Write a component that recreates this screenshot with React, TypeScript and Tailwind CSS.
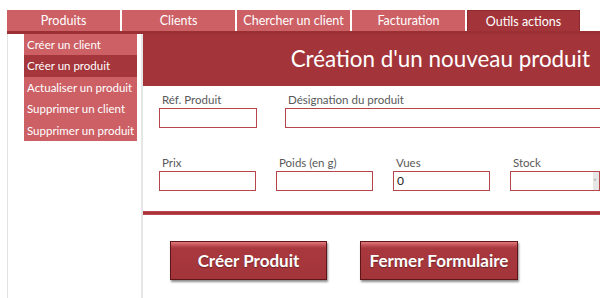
const tabs = ["Produits", "Clients", "Chercher un client", "Facturation", "Outils actions"];
const menu = ["Créer un client", "Créer un produit", "Actualiser un produit", "Supprimer un client", "Supprimer un produit"];

const Field = ({ label, width, value, select }: { label: string; width: string; value?: string; select?: boolean }) => (
  <div className={`flex flex-col shrink-0 ${width}`}>
    <span className="pl-[3px] text-[11.5px] leading-[14px] text-[#595959] whitespace-nowrap">{label}</span>
    <div className="relative mt-[1px] h-[20px] border border-[#b5464c] bg-white pl-[3px] text-[12px] leading-[18px] text-[#222]">
      {value}
      {select && (
        <span className="absolute right-0 top-0 h-full w-[6px] bg-[#e6e6e6] text-[8px] leading-[18px] text-[#999]">˅</span>
      )}
    </div>
  </div>
);

const Btn = ({ children, width }: { children: string; width: string }) => (
  <button
    className={`${width} h-[39px] border border-[#5e1619] bg-[linear-gradient(#e07a7e_0px,#c4545a_3px,#a8383d_6px,#a3353a_100%)] text-[17px] font-bold text-white shadow-[1px_2px_2px_rgba(0,0,0,0.45)] [text-shadow:0_1px_1px_rgba(0,0,0,0.35)]`}
  >
    {children}
  </button>
);

export default function App() {
  return (
    <div className="w-[600px] h-[298px] overflow-hidden bg-white font-['Lato','Open_Sans',sans-serif]">
      <div className="pt-[10px] pl-[7px]">
        <div className="flex gap-[2px] h-[21px]">
          {tabs.map((t, i) => (
            <div
              key={t}
              className={`w-[113px] shrink-0 text-center text-[12.5px] leading-[21px] text-white whitespace-nowrap ${
                i === 4 ? "bg-[#a3353a] border-x border-t border-[#8e2a2f]" : "bg-[#cd6065]"
              }`}
            >
              {t}
            </div>
          ))}
        </div>
        <div className="h-[3px] bg-[#9a2f34]" />
        <div className="flex h-[264px]">
          <div className="w-[134px] shrink-0 border-l border-[#e3e3e3] pl-[16px]">
            <div className="w-[113px] bg-[#cd6065]">
              {menu.map((m, i) => (
                <div
                  key={m}
                  className={`h-[21.4px] pl-[3px] text-[11.5px] leading-[21px] text-white whitespace-nowrap ${
                    i === 1 ? "bg-[#a5363b]" : ""
                  }`}
                >
                  {m}
                </div>
              ))}
            </div>
          </div>
          <div className="flex-1 min-w-0 overflow-hidden border-l-[2px] border-[#e6e6e6] flex flex-col">
            <div className="h-[52px] bg-[#a3353a] flex items-center justify-end pr-[10px] pb-[2px] text-[22.4px] text-white whitespace-nowrap overflow-hidden">
              Création d'un nouveau produit
            </div>
            <div className="pl-[16px] pt-[7px] flex flex-col">
              <div className="flex gap-[28px]">
                <Field label="Réf. Produit" width="w-[98px]" />
                <Field label="Désignation du produit" width="w-[330px]" />
              </div>
              <div className="flex gap-[20px] mt-[28px]">
                <Field label="Prix" width="w-[97px]" />
                <Field label="Poids (en g)" width="w-[97px]" />
                <Field label="Vues" width="w-[97px]" value="0" />
                <Field label="Stock" width="w-[90px]" select />
              </div>
            </div>
            <div className="mt-[20px] h-[4px] bg-[#a8343a] border-y border-[#b84a50]" />
            <div className="flex gap-[33px] pl-[27px] mt-[26px]">
              <Btn width="w-[157px]">Créer Produit</Btn>
              <Btn width="w-[158px]">Fermer Formulaire</Btn>
            </div>
          </div>
        </div>
      </div>
    </div>
  );
}
